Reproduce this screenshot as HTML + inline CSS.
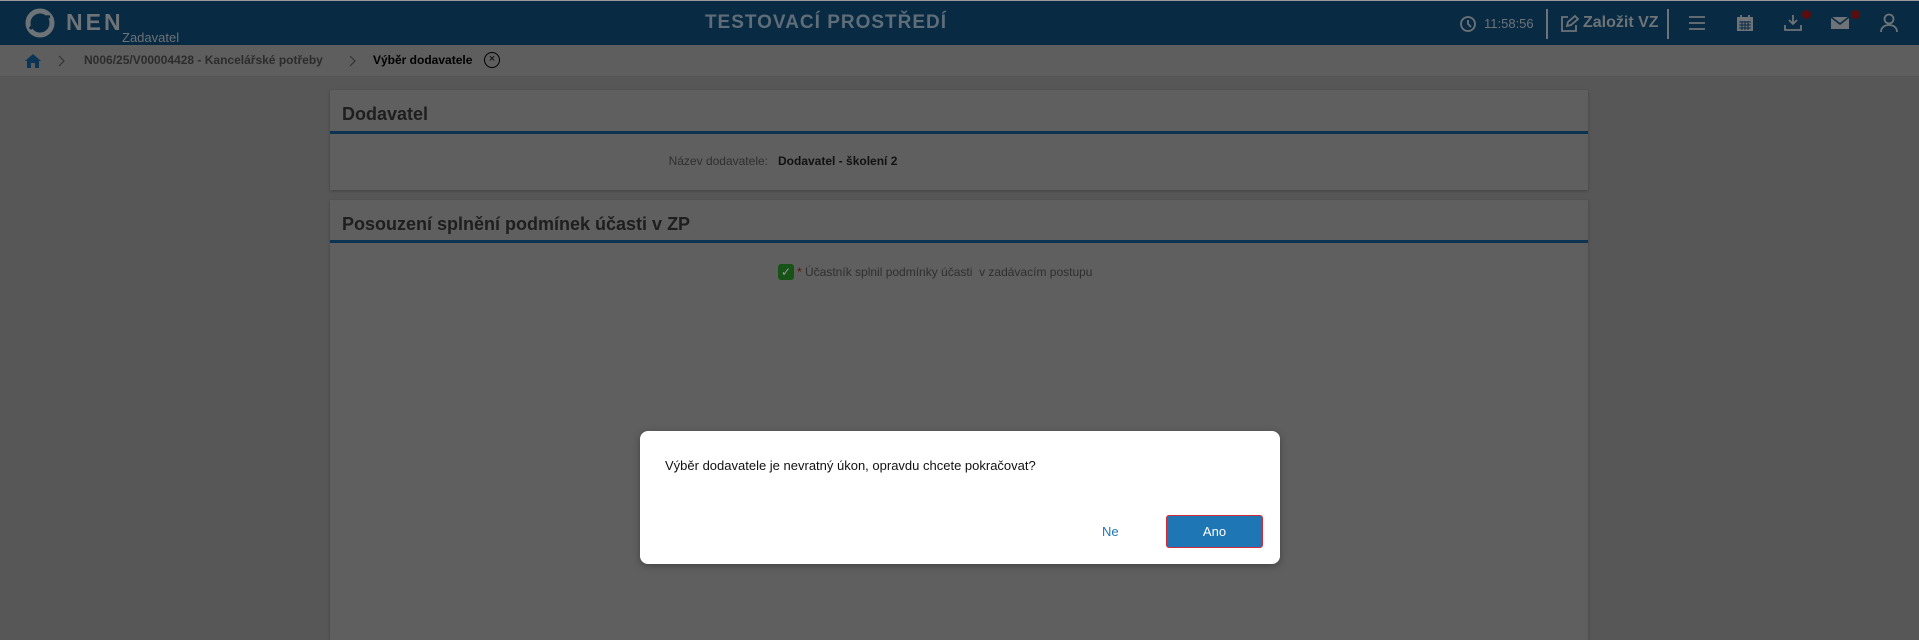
<!DOCTYPE html>
<html><head><meta charset="utf-8"><style>
*{box-sizing:border-box;margin:0;padding:0}
body{width:1919px;height:629px;overflow:hidden;background:#575757;font-family:"Liberation Sans",sans-serif;position:relative}
.abs{position:absolute}
#hdr{left:0;top:0;width:1919px;height:45px;background:#082a42;border-top:1px solid #9a9a9a}
#bc{left:0;top:45px;width:1919px;height:32px;background:#5e5e5e;border-bottom:1px solid #555}
.card{background:#5f5f5f;box-shadow:0 1px 3px rgba(0,0,0,.25)}
.ct{font-size:18px;font-weight:bold;color:#1e1e1e;left:12px}
.line{left:0;width:100%;height:3px;background:#0c3352}
.ic{stroke:#6e7378;fill:none;stroke-width:1.8}
</style></head><body>
<div id="hdr" class="abs">
 <svg class="abs" style="left:24px;top:6px" width="32" height="32" viewBox="0 0 32 32"><circle cx="16" cy="16" r="12" fill="none" stroke="#6d7377" stroke-width="5"/><path d="M6 22 Q16 8 26 10" stroke="#082a42" stroke-width="3" fill="none"/></svg>
 <div class="abs" style="left:66px;top:8px;font-size:23px;font-weight:bold;color:#6d7377;letter-spacing:3px">NEN</div>
 <div class="abs" style="left:122px;top:29px;font-size:13px;color:#6d7377">Zadavatel</div>
 <div class="abs" style="left:0;width:1652px;top:11px;text-align:center;font-size:19px;font-weight:bold;color:#5f6d79;letter-spacing:1px">TESTOVACÍ PROSTŘEDÍ</div>
 <svg class="abs" style="left:1459px;top:14px" width="18" height="18"><circle cx="9" cy="9" r="7" class="ic"/><path d="M9 5v4l3 3" class="ic"/></svg>
 <div class="abs" style="left:1484px;top:15px;font-size:13px;color:#6e7378">11:58:56</div>
 <div class="abs" style="left:1546px;top:8px;width:2px;height:30px;background:#6e7378"></div>
 <svg class="abs" style="left:1559px;top:13px" width="20" height="20"><path d="M9 3H3v14h14v-6M8 12l1-4 7-6 3 3-7 6z" class="ic"/></svg>
 <div class="abs" style="left:1583px;top:13px;font-size:16px;font-weight:bold;color:#6e7378">Založit VZ</div>
 <div class="abs" style="left:1667px;top:8px;width:2px;height:30px;background:#6e7378"></div>
 <svg class="abs" style="left:1688px;top:14px" width="18" height="16"><path d="M1 2h16M1 8h16M1 14h16" class="ic" stroke-width="2.2"/></svg>
 <svg class="abs" style="left:1736px;top:13px" width="18" height="18"><rect x="1" y="3" width="16" height="14" fill="#6e7378"/><path d="M5 1v4M13 1v4" class="ic"/><path d="M3 8h12M3 11h12M3 14h12M6 7v9M9 7v9M12 7v9" stroke="#082a42" stroke-width="1"/></svg>
 <svg class="abs" style="left:1783px;top:13px" width="20" height="18"><path d="M10 1v9M6 6l4 4 4-4M2 11v5h16v-5" class="ic"/></svg>
 <div class="abs" style="left:1802px;top:9px;width:9px;height:9px;border-radius:50%;background:#5a0d0d"></div>
 <svg class="abs" style="left:1831px;top:15px" width="18" height="14"><rect x="0" y="1" width="18" height="12" fill="#6e7378"/><path d="M0 1l9 7 9-7" stroke="#082a42" stroke-width="1.5" fill="none"/></svg>
 <div class="abs" style="left:1851px;top:9px;width:9px;height:9px;border-radius:50%;background:#5a0d0d"></div>
 <svg class="abs" style="left:1880px;top:12px" width="18" height="20"><circle cx="9" cy="6" r="4.5" class="ic"/><path d="M1 19c0-5 4-7 8-7s8 2 8 7" class="ic"/></svg>
</div>
<div id="bc" class="abs">
 <svg class="abs" style="left:24px;top:8px" width="18" height="16"><path d="M9 1L1 8h2v7h4v-5h4v5h4V8h2z" fill="#0c3455"/></svg>
 <svg class="abs" style="left:58px;top:10px" width="8" height="12"><path d="M1 1l5 5-5 5" stroke="#333" stroke-width="1.2" fill="none"/></svg>
 <div class="abs" style="left:84px;top:8px;font-size:12px;font-weight:bold;color:#2c2c2c">N006/25/V00004428 - Kancelářské potřeby</div>
 <svg class="abs" style="left:349px;top:10px" width="8" height="12"><path d="M1 1l5 5-5 5" stroke="#333" stroke-width="1.2" fill="none"/></svg>
 <div class="abs" style="left:373px;top:8px;font-size:12px;font-weight:bold;color:#000">Výběr dodavatele</div>
 <div class="abs" style="left:484px;top:7px;width:16px;height:16px;border:1.5px solid #000;border-radius:50%;font-size:11px;line-height:13px;text-align:center">×</div>
</div>
<div class="abs card" style="left:330px;top:90px;width:1258px;height:100px">
 <div class="abs ct" style="top:14px">Dodavatel</div>
 <div class="abs line" style="top:41px"></div>
 <div class="abs" style="left:0;width:438px;top:64px;text-align:right;font-size:12px;color:#2f2f2f">Název dodavatele:</div>
 <div class="abs" style="left:448px;top:64px;font-size:12px;font-weight:bold;color:#111">Dodavatel - školení 2</div>
</div>
<div class="abs card" style="left:330px;top:200px;width:1258px;height:440px">
 <div class="abs ct" style="top:14px">Posouzení splnění podmínek účasti v ZP</div>
 <div class="abs line" style="top:40px"></div>
 <div class="abs" style="left:448px;top:64px;width:16px;height:16px;border-radius:3px;background:#175217;color:#9a9a9a;font-size:12px;text-align:center;line-height:16px">✓</div>
 <div class="abs" style="left:467px;top:65px;font-size:12px;color:#2f2f2f"><span style="color:#5a1010">*</span> Účastník splnil podmínky účasti&nbsp; v zadávacím postupu</div>
</div>
<div class="abs" style="left:640px;top:431px;width:640px;height:133px;background:#fff;border-radius:8px;box-shadow:0 2px 8px rgba(0,0,0,.3)">
 <div class="abs" style="left:25px;top:27px;font-size:13px;color:#111">Výběr dodavatele je nevratný úkon, opravdu chcete pokračovat?</div>
 <div class="abs" style="left:462px;top:93px;font-size:13px;color:#1f76b4">Ne</div>
 <div class="abs" style="left:526px;top:84px;width:97px;height:33px;background:#1f76b4;border:1px solid #d42a3a;border-radius:3px;color:#fff;font-size:13px;text-align:center;line-height:31px">Ano</div>
</div>
</body></html>
